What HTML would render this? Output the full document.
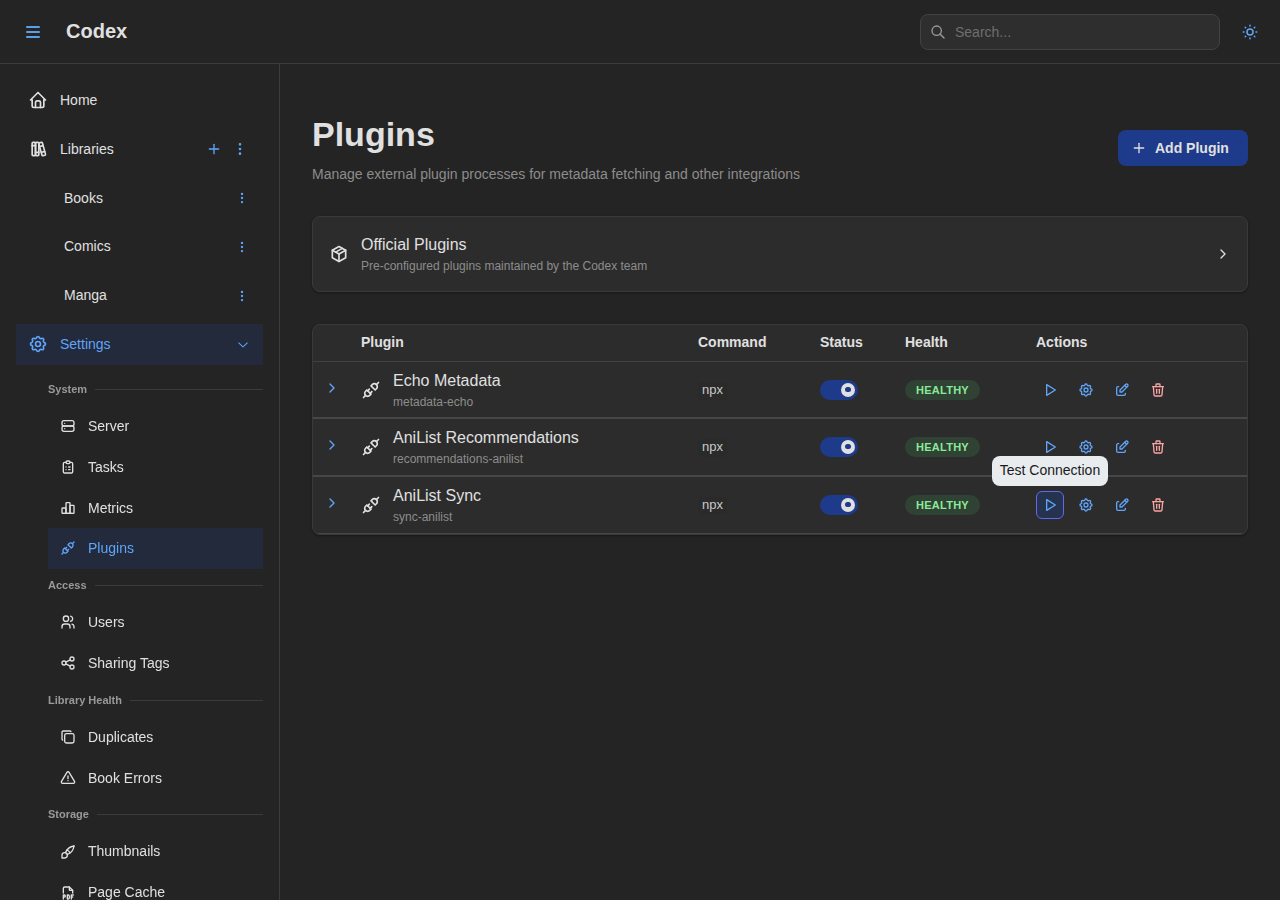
<!DOCTYPE html>
<html><head><meta charset="utf-8">
<style>
*{box-sizing:border-box;margin:0;padding:0}
html,body{width:1280px;height:900px;overflow:hidden;background:#242424;font-family:"Liberation Sans",sans-serif;color:#e0e0e0;-webkit-font-smoothing:antialiased}
svg{display:block;fill:none;stroke:currentColor;stroke-width:2;stroke-linecap:round;stroke-linejoin:round}
.header{position:absolute;left:0;top:0;width:1280px;height:64px;border-bottom:1px solid #3a3c41;background:#242424}
.burger{position:absolute;left:26px;top:26px;width:14px;height:12px}
.burger i{position:absolute;left:0;width:14px;height:2px;background:#5c9ee8;border-radius:1px}
.logo{position:absolute;left:66px;top:18px;font-size:20px;font-weight:700;line-height:26px;color:#e0e0e0}
.search{position:absolute;left:920px;top:14px;width:300px;height:36px;border:1px solid #424242;border-radius:8px;background:#2e2e2e}
.search svg{position:absolute;left:9px;top:9px;color:#9a9a9a}
.search span{position:absolute;left:34px;top:0;line-height:34px;font-size:14px;color:#6f6f6f}
.sun{position:absolute;left:1241px;top:23px;color:#60a5fa}
.nav{position:absolute;left:0;top:64px;width:280px;height:836px;border-right:1px solid #3a3c41;background:#242424}
.ni{position:absolute;left:16px;width:247px;height:40.8px;display:flex;align-items:center;font-size:14px;color:#e0e0e0}
.ni .ic{position:absolute;left:12px;top:10.4px}
.ni .lb{position:absolute;left:44px;line-height:21.7px;top:9.55px}
.ni.sub{left:48px;width:215px}
.ni.sub .ic{top:12.4px}
.ni.sub .lb{left:40px;top:10.75px}
.col{position:absolute;left:0;top:0;width:279px;height:836px;will-change:transform}
.ni.act{background:#222a3b;color:#60a5fa}
.ni.child .lb{left:48px}
.dl{position:absolute;left:48px;width:215px;height:32.8px;display:flex;align-items:center;font-size:11px;font-weight:700;color:#999}
.dl::after{content:"";flex:1;border-top:1px solid #3b3b3b;margin-left:8px}
.dl.lo::after{position:relative;top:1px}
.main{position:absolute;left:280px;top:64px;width:1000px;height:836px}
h1{position:absolute;left:32px;top:48px;font-size:34px;line-height:44.2px;font-weight:700;color:#e0e0e0}
.subt{position:absolute;left:32px;top:100px;font-size:14px;line-height:21.7px;color:#8c8c8c}
.btn{position:absolute;left:838px;top:66px;width:130px;height:36px;border-radius:8px;background:#1e3a8a;color:#e0e0e0;font-size:14px;font-weight:700}
.btn svg{position:absolute;left:13px;top:10px}
.btn span{position:absolute;left:37px;top:0;line-height:36px}
.card{position:absolute;left:32px;top:152px;width:936px;height:76px;border:1px solid #373a40;border-radius:8px;background:#2c2c2c;box-shadow:0 1px 3px rgba(0,0,0,.12),0 1px 2px rgba(0,0,0,.2)}
.card .pk{position:absolute;left:16px;top:27px}
.card .t1{position:absolute;left:48px;top:16px;font-size:16px;line-height:24px;color:#e0e0e0}
.card .t2{position:absolute;left:48px;top:40px;font-size:12px;line-height:18px;color:#8c8c8c}
.card .chev{position:absolute;right:16px;top:29px;color:#dedede}
.table{position:absolute;left:32px;top:260px;width:936px;height:211px;border:1px solid #373a40;border-radius:8px;background:#2c2c2c;overflow:hidden;box-shadow:0 1px 3px rgba(0,0,0,.12),0 1px 2px rgba(0,0,0,.2)}
.th{position:absolute;top:0;left:0;width:934px;height:37px;border-bottom:1px solid #414141}
.th span{position:absolute;top:7px;line-height:21.7px;font-size:14px;font-weight:700;color:#e0e0e0}
.tr{position:absolute;left:0;width:934px;height:58px;border-bottom:1px solid #464646}
.tr .ex{position:absolute;left:11px;top:21px;color:#60a5fa}
.tr .pl{position:absolute;left:48px;top:19px;color:#e0e0e0}
.tr .nm{position:absolute;left:80px;top:8px;font-size:16px;line-height:24px;color:#e0e0e0}
.tr .id{position:absolute;left:80px;top:31px;font-size:12px;line-height:18px;color:#8c8c8c}
.tr .cmd{position:absolute;left:385px;top:20px;height:18px;padding:0 4px;background:#2a2a2a;border-radius:4px;font-size:13px;line-height:16px;color:#c9c9c9}
.tr .sw{position:absolute;left:507px;top:19px;width:38px;height:20px;border-radius:10px;background:#1e3a8a}
.tr .sw i{position:absolute;left:21px;top:3px;width:14px;height:14px;border-radius:7px;background:#e0e0e0}
.tr .sw i::after{content:"";position:absolute;left:4px;top:4px;width:6px;height:5px;border-radius:3px;background:#1e3a8a}
.tr .bd{position:absolute;left:592px;top:19px;width:75px;height:20px;border-radius:10px;background:#2f4233;color:#8ce99a;font-size:11px;font-weight:700;line-height:20px;text-align:center;letter-spacing:.25px}
.tr .ai{position:absolute;top:15px;width:28px;height:28px;border-radius:8px}
.tr .ai svg{position:absolute;left:6px;top:6px}
.tr .ai.focus{background:#26334f;border:1px solid #6366f1;border-radius:6px}
.tr .ai.focus svg{left:5px;top:5px}
.tip{position:absolute;left:992px;top:456px;width:116px;height:30px;border-radius:8px;background:#e9ecef;color:#1a1a1a;font-size:14px;line-height:28px;text-align:center}
</style></head><body>
<div class="header">
  <div class="burger"><i style="top:0"></i><i style="top:5px"></i><i style="top:10px"></i></div>
  <div class="logo">Codex</div>
  <div class="search">
    <svg width="16" height="16" viewBox="0 0 24 24"><path d="M10 10m-7 0a7 7 0 1 0 14 0a7 7 0 1 0 -14 0"/><path d="M21 21l-6 -6"/></svg>
    <span>Search...</span>
  </div>
  <svg class="sun" width="18" height="18" viewBox="0 0 24 24"><path d="M12 12m-4 0a4 4 0 1 0 8 0a4 4 0 1 0 -8 0"/><path d="M3 12h1m8 -9v1m8 8h1m-9 8v1m-6.4 -15.4l.7 .7m12.1 -.7l-.7 .7m0 11.4l.7 .7m-12.1 -.7l-.7 .7"/></svg>
</div>
<div class="nav">
<div class="ni " style="top:16px"><svg class="ic" width="20" height="20" viewBox="0 0 24 24"><path d="M5 12l-2 0l9 -9l9 9l-2 0"/><path d="M5 12v7a2 2 0 0 0 2 2h10a2 2 0 0 0 2 -2v-7"/><path d="M9 21v-6a2 2 0 0 1 2 -2h2a2 2 0 0 1 2 2v6"/></svg><span class="lb">Home</span></div>
<div class="ni " style="top:64.8px"><svg class="ic" width="20" height="20" viewBox="0 0 24 24"><path d="M5 4m0 1a1 1 0 0 1 1 -1h2a1 1 0 0 1 1 1v14a1 1 0 0 1 -1 1h-2a1 1 0 0 1 -1 -1z"/><path d="M9 4m0 1a1 1 0 0 1 1 -1h2a1 1 0 0 1 1 1v14a1 1 0 0 1 -1 1h-2a1 1 0 0 1 -1 -1z"/><path d="M5 8h4"/><path d="M9 16h4"/><path d="M13.803 4.56l2.184 -.53c.562 -.135 1.133 .19 1.282 .732l3.695 13.418a1.02 1.02 0 0 1 -.634 1.219l-.133 .041l-2.184 .53c-.562 .135 -1.133 -.19 -1.282 -.732l-3.695 -13.418a1.02 1.02 0 0 1 .634 -1.219l.133 -.041z"/><path d="M14 9l4 -1"/><path d="M16 16l3.923 -.98"/></svg><span class="lb" style="top:10.55px">Libraries</span><svg style="position:absolute;left:190px;top:12.4px;color:#60a5fa" width="16" height="16" viewBox="0 0 24 24"><path d="M12 5l0 14"/><path d="M5 12l14 0"/></svg><svg style="position:absolute;left:216px;top:12.4px;color:#60a5fa" width="16" height="16" viewBox="0 0 24 24"><path d="M12 12m-1 0a1 1 0 1 0 2 0a1 1 0 1 0 -2 0"/><path d="M12 19m-1 0a1 1 0 1 0 2 0a1 1 0 1 0 -2 0"/><path d="M12 5m-1 0a1 1 0 1 0 2 0a1 1 0 1 0 -2 0"/></svg></div>
<div class="ni child" style="top:113.6px"><span class="lb" style="top:10.55px">Books</span><svg style="position:absolute;left:219px;top:13.4px;color:#60a5fa" width="14" height="14" viewBox="0 0 24 24"><path d="M12 12m-1 0a1 1 0 1 0 2 0a1 1 0 1 0 -2 0"/><path d="M12 19m-1 0a1 1 0 1 0 2 0a1 1 0 1 0 -2 0"/><path d="M12 5m-1 0a1 1 0 1 0 2 0a1 1 0 1 0 -2 0"/></svg></div>
<div class="ni child" style="top:162.4px"><span class="lb">Comics</span><svg style="position:absolute;left:219px;top:13.4px;color:#60a5fa" width="14" height="14" viewBox="0 0 24 24"><path d="M12 12m-1 0a1 1 0 1 0 2 0a1 1 0 1 0 -2 0"/><path d="M12 19m-1 0a1 1 0 1 0 2 0a1 1 0 1 0 -2 0"/><path d="M12 5m-1 0a1 1 0 1 0 2 0a1 1 0 1 0 -2 0"/></svg></div>
<div class="ni child" style="top:211.2px"><span class="lb">Manga</span><svg style="position:absolute;left:219px;top:13.4px;color:#60a5fa" width="14" height="14" viewBox="0 0 24 24"><path d="M12 12m-1 0a1 1 0 1 0 2 0a1 1 0 1 0 -2 0"/><path d="M12 19m-1 0a1 1 0 1 0 2 0a1 1 0 1 0 -2 0"/><path d="M12 5m-1 0a1 1 0 1 0 2 0a1 1 0 1 0 -2 0"/></svg></div>
<div class="ni act" style="top:260px"><svg class="ic" width="20" height="20" viewBox="0 0 24 24"><path d="M10.325 4.317c.426 -1.756 2.924 -1.756 3.35 0a1.724 1.724 0 0 0 2.573 1.066c1.543 -.94 3.31 .826 2.37 2.37a1.724 1.724 0 0 0 1.065 2.572c1.756 .426 1.756 2.924 0 3.35a1.724 1.724 0 0 0 -1.066 2.573c.94 1.543 -.826 3.31 -2.37 2.37a1.724 1.724 0 0 0 -2.572 1.065c-.426 1.756 -2.924 1.756 -3.35 0a1.724 1.724 0 0 0 -2.573 -1.066c-1.543 .94 -3.31 -.826 -2.37 -2.37a1.724 1.724 0 0 0 -1.065 -2.572c-1.756 -.426 -1.756 -2.924 0 -3.35a1.724 1.724 0 0 0 1.066 -2.573c-.94 -1.543 .826 -3.31 2.37 -2.37c1 .608 2.296 .07 2.572 -1.065z"/><path d="M9 12a3 3 0 1 0 6 0a3 3 0 0 0 -6 0"/></svg><span class="lb">Settings</span><svg style="position:absolute;left:219px;top:11.6px;color:#60a5fa;stroke:none;fill:currentColor" width="16" height="16" viewBox="0 0 15 15"><path fill-rule="evenodd" d="M3.13523 6.15803C3.3241 5.95657 3.64052 5.94637 3.84197 6.13523L7.5 9.56464L11.158 6.13523C11.3595 5.94637 11.6759 5.95657 11.8648 6.15803C12.0536 6.35949 12.0434 6.67591 11.842 6.86477L7.84197 10.6148C7.64964 10.7951 7.35036 10.7951 7.15803 10.6148L3.15803 6.86477C2.95657 6.67591 2.94637 6.35949 3.13523 6.15803Z"/></svg></div>
<div class="col">
<div class="dl " style="top:308.8px">System</div>
<div class="ni sub " style="top:341.6px"><svg class="ic" width="16" height="16" viewBox="0 0 24 24"><path d="M3 4m0 3a3 3 0 0 1 3 -3h12a3 3 0 0 1 3 3v2a3 3 0 0 1 -3 3h-12a3 3 0 0 1 -3 -3z"/><path d="M3 12m0 3a3 3 0 0 1 3 -3h12a3 3 0 0 1 3 3v2a3 3 0 0 1 -3 3h-12a3 3 0 0 1 -3 -3z"/><path d="M7 8l0 .01"/><path d="M7 16l0 .01"/></svg><span class="lb">Server</span></div>
<div class="ni sub " style="top:382.4px"><svg class="ic" width="16" height="16" viewBox="0 0 24 24"><path d="M9 5h-2a2 2 0 0 0 -2 2v12a2 2 0 0 0 2 2h10a2 2 0 0 0 2 -2v-12a2 2 0 0 0 -2 -2h-2"/><path d="M9 3m0 2a2 2 0 0 1 2 -2h2a2 2 0 0 1 2 2v0a2 2 0 0 1 -2 2h-2a2 2 0 0 1 -2 -2z"/><path d="M9 12l.01 0"/><path d="M13 12l2 0"/><path d="M9 16l.01 0"/><path d="M13 16l2 0"/></svg><span class="lb">Tasks</span></div>
<div class="ni sub " style="top:423.2px"><svg class="ic" width="16" height="16" viewBox="0 0 24 24"><path d="M3 13a1 1 0 0 1 1 -1h4a1 1 0 0 1 1 1v6a1 1 0 0 1 -1 1h-4a1 1 0 0 1 -1 -1z"/><path d="M9 5a1 1 0 0 1 1 -1h4a1 1 0 0 1 1 1v14a1 1 0 0 1 -1 1h-4a1 1 0 0 1 -1 -1z"/><path d="M15 9a1 1 0 0 1 1 -1h4a1 1 0 0 1 1 1v10a1 1 0 0 1 -1 1h-4a1 1 0 0 1 -1 -1z"/><path d="M4 20h14"/></svg><span class="lb">Metrics</span></div>
<div class="ni sub act" style="top:464px"><svg class="ic" width="16" height="16" viewBox="0 0 24 24"><path d="M7 12l5 5l-1.5 1.5a3.536 3.536 0 1 1 -5 -5l1.5 -1.5z"/><path d="M17 12l-5 -5l1.5 -1.5a3.536 3.536 0 1 1 5 5l-1.5 1.5z"/><path d="M3 21l2.5 -2.5"/><path d="M18.5 5.5l2.5 -2.5"/><path d="M10 11l-2 2"/><path d="M13 14l-2 2"/></svg><span class="lb" style="top:9.55px">Plugins</span></div>
<div class="dl " style="top:504.8px">Access</div>
<div class="ni sub " style="top:537.6px"><svg class="ic" width="16" height="16" viewBox="0 0 24 24"><path d="M9 7m-4 0a4 4 0 1 0 8 0a4 4 0 1 0 -8 0"/><path d="M3 21v-2a4 4 0 0 1 4 -4h4a4 4 0 0 1 4 4v2"/><path d="M16 3.13a4 4 0 0 1 0 7.75"/><path d="M21 21v-2a4 4 0 0 0 -3 -3.85"/></svg><span class="lb">Users</span></div>
<div class="ni sub " style="top:578.4px"><svg class="ic" width="16" height="16" viewBox="0 0 24 24"><path d="M6 12m-3 0a3 3 0 1 0 6 0a3 3 0 1 0 -6 0"/><path d="M18 6m-3 0a3 3 0 1 0 6 0a3 3 0 1 0 -6 0"/><path d="M18 18m-3 0a3 3 0 1 0 6 0a3 3 0 1 0 -6 0"/><path d="M8.7 10.7l6.6 -3.4"/><path d="M8.7 13.3l6.6 3.4"/></svg><span class="lb">Sharing Tags</span></div>
<div class="dl lo" style="top:619.2px">Library Health</div>
<div class="ni sub " style="top:652px"><svg class="ic" style="top:13.4px" width="16" height="16" viewBox="0 0 24 24"><path d="M7 7m0 2.667a2.667 2.667 0 0 1 2.667 -2.667h8.666a2.667 2.667 0 0 1 2.667 2.667v8.666a2.667 2.667 0 0 1 -2.667 2.667h-8.666a2.667 2.667 0 0 1 -2.667 -2.667z"/><path d="M4.012 16.737a2.005 2.005 0 0 1 -1.012 -1.737v-10c0 -1.1 .9 -2 2 -2h10c.75 0 1.158 .385 1.5 1"/></svg><span class="lb">Duplicates</span></div>
<div class="ni sub " style="top:692.8px"><svg class="ic" style="top:13.4px" width="16" height="16" viewBox="0 0 24 24"><path d="M12 9v4"/><path d="M10.363 3.591l-8.106 13.534a1.914 1.914 0 0 0 1.636 2.871h16.214a1.914 1.914 0 0 0 1.636 -2.87l-8.106 -13.536a1.914 1.914 0 0 0 -3.274 0z"/><path d="M12 16h.01"/></svg><span class="lb">Book Errors</span></div>
<div class="dl lo" style="top:733.6px">Storage</div>
<div class="ni sub " style="top:766.4px"><svg class="ic" style="top:13.4px" width="16" height="16" viewBox="0 0 24 24"><path d="M3 21v-4a4 4 0 1 1 4 4h-4"/><path d="M21 3a16 16 0 0 0 -12.8 10.2"/><path d="M21 3a16 16 0 0 1 -10.2 12.8"/><path d="M10.6 9a9 9 0 0 1 4.4 4.4"/></svg><span class="lb">Thumbnails</span></div>
<div class="ni sub " style="top:807.2px"><svg class="ic" style="top:13.4px" width="16" height="16" viewBox="0 0 24 24"><path d="M14 3v4a1 1 0 0 0 1 1h4"/><path d="M5 12v-7a2 2 0 0 1 2 -2h7l5 5v4"/><path d="M5 18h1.5a1.5 1.5 0 0 0 0 -3h-1.5v6"/><path d="M17 18h2"/><path d="M20 15h-3v6"/><path d="M11 15v6h1a2 2 0 0 0 2 -2v-2a2 2 0 0 0 -2 -2h-1z"/></svg><span class="lb">Page Cache</span></div>
</div>
</div>
<div class="main">
<h1>Plugins</h1>
<div class="subt">Manage external plugin processes for metadata fetching and other integrations</div>
<div class="btn"><svg width="16" height="16" viewBox="0 0 24 24"><path d="M12 5l0 14"/><path d="M5 12l14 0"/></svg><span>Add Plugin</span></div>
<div class="card"><svg class="pk" width="20" height="20" viewBox="0 0 24 24"><path d="M12 3l8 4.5l0 9l-8 4.5l-8 -4.5l0 -9l8 -4.5"/><path d="M12 12l8 -4.5"/><path d="M12 12l0 9"/><path d="M12 12l-8 -4.5"/><path d="M16 5.25l-8 4.5"/></svg><div class="t1">Official Plugins</div><div class="t2">Pre-configured plugins maintained by the Codex team</div><svg class="chev" width="16" height="16" viewBox="0 0 24 24"><path d="M9 6l6 6l-6 6"/></svg></div>
<div class="table"><div class="th"><span style="left:48px">Plugin</span><span style="left:385px">Command</span><span style="left:507px">Status</span><span style="left:592px">Health</span><span style="left:723px">Actions</span></div>
<div class="tr" style="top:37px;height:57px;border-bottom-width:2px"><svg class="ex" style="top:18px" width="16" height="16" viewBox="0 0 24 24"><path d="M9 6l6 6l-6 6"/></svg><svg class="pl" style="top:18px" width="20" height="20" viewBox="0 0 24 24"><path d="M7 12l5 5l-1.5 1.5a3.536 3.536 0 1 1 -5 -5l1.5 -1.5z"/><path d="M17 12l-5 -5l1.5 -1.5a3.536 3.536 0 1 1 5 5l-1.5 1.5z"/><path d="M3 21l2.5 -2.5"/><path d="M18.5 5.5l2.5 -2.5"/><path d="M10 11l-2 2"/><path d="M13 14l-2 2"/></svg><div class="nm" style="top:6.7px">Echo Metadata</div><div class="id" style="top:31.2px">metadata-echo</div><div class="cmd" style="top:20.0px">npx</div><div class="sw" style="top:18.0px"><i></i></div><div class="bd" style="top:18.0px">HEALTHY</div><div class="ai" style="left:723px;top:13.5px;color:#60a5fa"><svg width="16" height="16" viewBox="0 0 24 24"><path d="M7 4v16l13 -8z"/></svg></div><div class="ai" style="left:759px;top:13.5px;color:#60a5fa"><svg width="16" height="16" viewBox="0 0 24 24"><path d="M10.325 4.317c.426 -1.756 2.924 -1.756 3.35 0a1.724 1.724 0 0 0 2.573 1.066c1.543 -.94 3.31 .826 2.37 2.37a1.724 1.724 0 0 0 1.065 2.572c1.756 .426 1.756 2.924 0 3.35a1.724 1.724 0 0 0 -1.066 2.573c.94 1.543 -.826 3.31 -2.37 2.37a1.724 1.724 0 0 0 -2.572 1.065c-.426 1.756 -2.924 1.756 -3.35 0a1.724 1.724 0 0 0 -2.573 -1.066c-1.543 .94 -3.31 -.826 -2.37 -2.37a1.724 1.724 0 0 0 -1.065 -2.572c-1.756 -.426 -1.756 -2.924 0 -3.35a1.724 1.724 0 0 0 1.066 -2.573c-.94 -1.543 .826 -3.31 2.37 -2.37c1 .608 2.296 .07 2.572 -1.065z"/><path d="M9 12a3 3 0 1 0 6 0a3 3 0 0 0 -6 0"/></svg></div><div class="ai" style="left:795px;top:13.5px;color:#60a5fa"><svg width="16" height="16" viewBox="0 0 24 24"><path d="M7 7h-1a2 2 0 0 0 -2 2v9a2 2 0 0 0 2 2h9a2 2 0 0 0 2 -2v-1"/><path d="M20.385 6.585a2.1 2.1 0 0 0 -2.97 -2.97l-8.415 8.385v3h3l8.385 -8.415z"/><path d="M16 5l3 3"/></svg></div><div class="ai" style="left:831px;top:13.5px;color:#fca5a5"><svg width="16" height="16" viewBox="0 0 24 24"><path d="M4 7l16 0"/><path d="M10 11l0 6"/><path d="M14 11l0 6"/><path d="M5 7l1 12a2 2 0 0 0 2 2h8a2 2 0 0 0 2 -2l1 -12"/><path d="M9 7v-3a1 1 0 0 1 1 -1h4a1 1 0 0 1 1 1v3"/></svg></div></div>
<div class="tr" style="top:94px;height:58px;border-bottom-width:2px"><svg class="ex" style="top:18px" width="16" height="16" viewBox="0 0 24 24"><path d="M9 6l6 6l-6 6"/></svg><svg class="pl" style="top:18px" width="20" height="20" viewBox="0 0 24 24"><path d="M7 12l5 5l-1.5 1.5a3.536 3.536 0 1 1 -5 -5l1.5 -1.5z"/><path d="M17 12l-5 -5l1.5 -1.5a3.536 3.536 0 1 1 5 5l-1.5 1.5z"/><path d="M3 21l2.5 -2.5"/><path d="M18.5 5.5l2.5 -2.5"/><path d="M10 11l-2 2"/><path d="M13 14l-2 2"/></svg><div class="nm" style="top:7.2px">AniList Recommendations</div><div class="id" style="top:31.2px">recommendations-anilist</div><div class="cmd" style="top:20.0px">npx</div><div class="sw" style="top:18.0px"><i></i></div><div class="bd" style="top:18.0px">HEALTHY</div><div class="ai" style="left:723px;top:14px;color:#60a5fa"><svg width="16" height="16" viewBox="0 0 24 24"><path d="M7 4v16l13 -8z"/></svg></div><div class="ai" style="left:759px;top:14px;color:#60a5fa"><svg width="16" height="16" viewBox="0 0 24 24"><path d="M10.325 4.317c.426 -1.756 2.924 -1.756 3.35 0a1.724 1.724 0 0 0 2.573 1.066c1.543 -.94 3.31 .826 2.37 2.37a1.724 1.724 0 0 0 1.065 2.572c1.756 .426 1.756 2.924 0 3.35a1.724 1.724 0 0 0 -1.066 2.573c.94 1.543 -.826 3.31 -2.37 2.37a1.724 1.724 0 0 0 -2.572 1.065c-.426 1.756 -2.924 1.756 -3.35 0a1.724 1.724 0 0 0 -2.573 -1.066c-1.543 .94 -3.31 -.826 -2.37 -2.37a1.724 1.724 0 0 0 -1.065 -2.572c-1.756 -.426 -1.756 -2.924 0 -3.35a1.724 1.724 0 0 0 1.066 -2.573c-.94 -1.543 .826 -3.31 2.37 -2.37c1 .608 2.296 .07 2.572 -1.065z"/><path d="M9 12a3 3 0 1 0 6 0a3 3 0 0 0 -6 0"/></svg></div><div class="ai" style="left:795px;top:14px;color:#60a5fa"><svg width="16" height="16" viewBox="0 0 24 24"><path d="M7 7h-1a2 2 0 0 0 -2 2v9a2 2 0 0 0 2 2h9a2 2 0 0 0 2 -2v-1"/><path d="M20.385 6.585a2.1 2.1 0 0 0 -2.97 -2.97l-8.415 8.385v3h3l8.385 -8.415z"/><path d="M16 5l3 3"/></svg></div><div class="ai" style="left:831px;top:14px;color:#fca5a5"><svg width="16" height="16" viewBox="0 0 24 24"><path d="M4 7l16 0"/><path d="M10 11l0 6"/><path d="M14 11l0 6"/><path d="M5 7l1 12a2 2 0 0 0 2 2h8a2 2 0 0 0 2 -2l1 -12"/><path d="M9 7v-3a1 1 0 0 1 1 -1h4a1 1 0 0 1 1 1v3"/></svg></div></div>
<div class="tr" style="top:152px;height:57px;border-bottom-width:1px"><svg class="ex" style="top:18px" width="16" height="16" viewBox="0 0 24 24"><path d="M9 6l6 6l-6 6"/></svg><svg class="pl" style="top:18px" width="20" height="20" viewBox="0 0 24 24"><path d="M7 12l5 5l-1.5 1.5a3.536 3.536 0 1 1 -5 -5l1.5 -1.5z"/><path d="M17 12l-5 -5l1.5 -1.5a3.536 3.536 0 1 1 5 5l-1.5 1.5z"/><path d="M3 21l2.5 -2.5"/><path d="M18.5 5.5l2.5 -2.5"/><path d="M10 11l-2 2"/><path d="M13 14l-2 2"/></svg><div class="nm" style="top:7.2px">AniList Sync</div><div class="id" style="top:31.2px">sync-anilist</div><div class="cmd" style="top:20.0px">npx</div><div class="sw" style="top:18.0px"><i></i></div><div class="bd" style="top:18.0px">HEALTHY</div><div class="ai focus" style="left:723px;top:14px;color:#60a5fa"><svg width="16" height="16" viewBox="0 0 24 24"><path d="M7 4v16l13 -8z"/></svg></div><div class="ai" style="left:759px;top:14px;color:#60a5fa"><svg width="16" height="16" viewBox="0 0 24 24"><path d="M10.325 4.317c.426 -1.756 2.924 -1.756 3.35 0a1.724 1.724 0 0 0 2.573 1.066c1.543 -.94 3.31 .826 2.37 2.37a1.724 1.724 0 0 0 1.065 2.572c1.756 .426 1.756 2.924 0 3.35a1.724 1.724 0 0 0 -1.066 2.573c.94 1.543 -.826 3.31 -2.37 2.37a1.724 1.724 0 0 0 -2.572 1.065c-.426 1.756 -2.924 1.756 -3.35 0a1.724 1.724 0 0 0 -2.573 -1.066c-1.543 .94 -3.31 -.826 -2.37 -2.37a1.724 1.724 0 0 0 -1.065 -2.572c-1.756 -.426 -1.756 -2.924 0 -3.35a1.724 1.724 0 0 0 1.066 -2.573c-.94 -1.543 .826 -3.31 2.37 -2.37c1 .608 2.296 .07 2.572 -1.065z"/><path d="M9 12a3 3 0 1 0 6 0a3 3 0 0 0 -6 0"/></svg></div><div class="ai" style="left:795px;top:14px;color:#60a5fa"><svg width="16" height="16" viewBox="0 0 24 24"><path d="M7 7h-1a2 2 0 0 0 -2 2v9a2 2 0 0 0 2 2h9a2 2 0 0 0 2 -2v-1"/><path d="M20.385 6.585a2.1 2.1 0 0 0 -2.97 -2.97l-8.415 8.385v3h3l8.385 -8.415z"/><path d="M16 5l3 3"/></svg></div><div class="ai" style="left:831px;top:14px;color:#fca5a5"><svg width="16" height="16" viewBox="0 0 24 24"><path d="M4 7l16 0"/><path d="M10 11l0 6"/><path d="M14 11l0 6"/><path d="M5 7l1 12a2 2 0 0 0 2 2h8a2 2 0 0 0 2 -2l1 -12"/><path d="M9 7v-3a1 1 0 0 1 1 -1h4a1 1 0 0 1 1 1v3"/></svg></div></div></div>
</div>
<div class="tip">Test Connection</div>
</body></html>
